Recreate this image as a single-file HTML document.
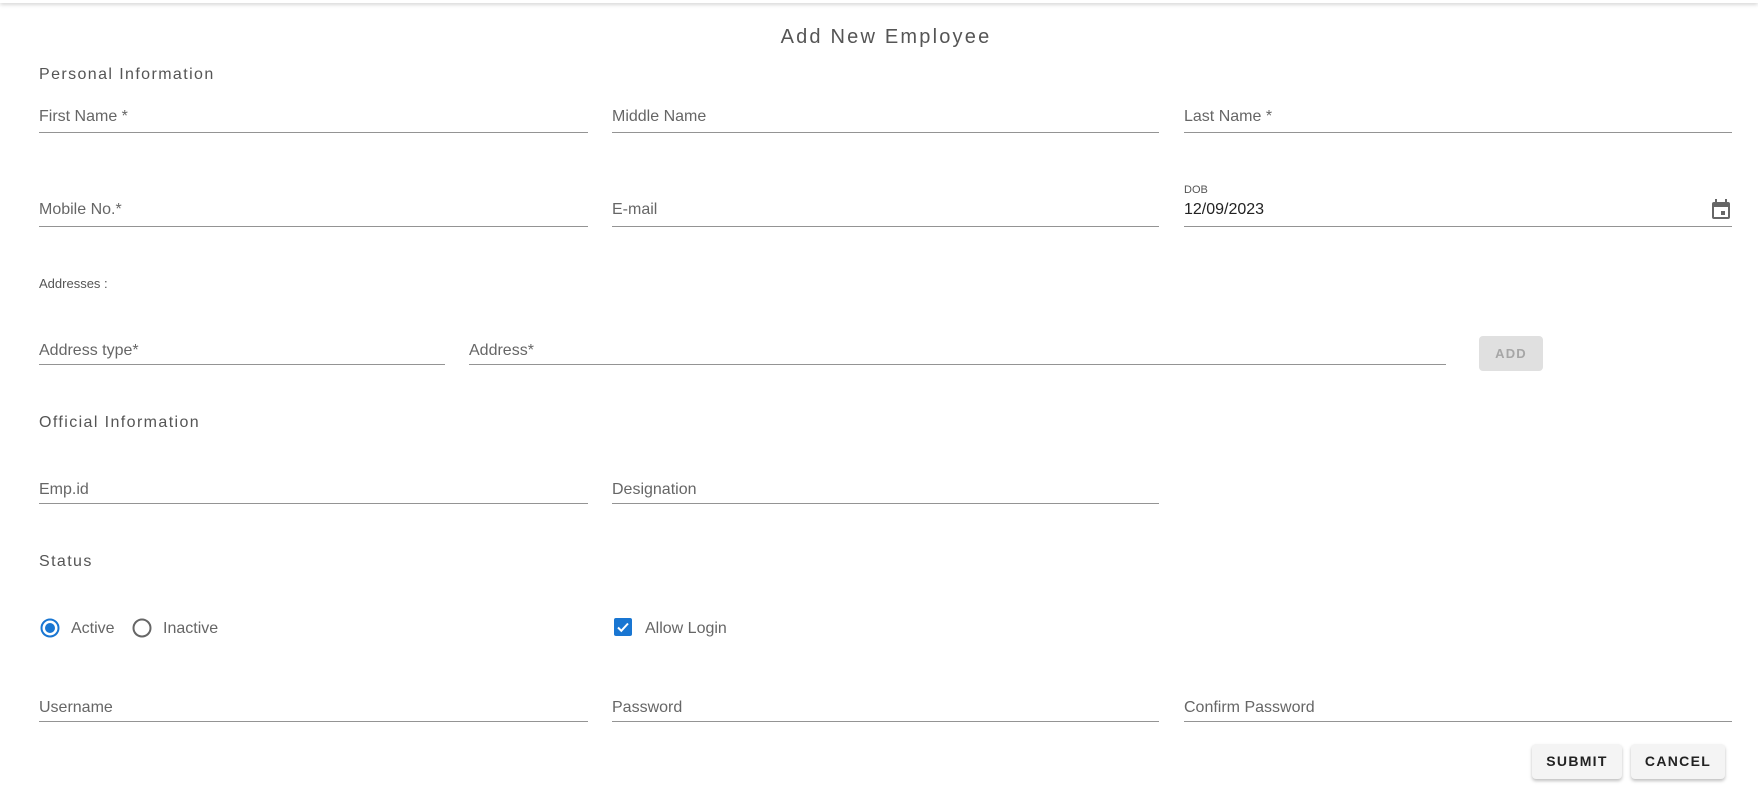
<!DOCTYPE html>
<html><head><style>
body{margin:0;width:1758px;height:810px;background:#fff;font-family:"Liberation Sans",sans-serif;position:relative;overflow:hidden;color:#5f5f5f}
.topbar{position:absolute;left:0;top:0;width:1758px;height:3px;box-shadow:0 1px 4px rgba(0,0,0,.25)}
.t{position:absolute;white-space:nowrap}
.h{font-size:16px;color:#555;letter-spacing:1.4px}
.lbl{font-size:16px;color:#666}
.ul{position:absolute;height:1px;background:#949494}
.btn{position:absolute;background:#f4f4f4;border-radius:4px;box-shadow:0 2px 3px rgba(0,0,0,.25);font-size:14px;font-weight:bold;letter-spacing:1.3px;color:#222;text-align:center}
</style></head><body>
<div class="topbar"></div>
<div class="t" style="left:0;width:1772px;text-align:center;top:26px;font-size:20px;color:#555;letter-spacing:2.2px">Add New Employee</div>
<div class="t h" style="left:39px;top:66px">Personal Information</div>

<div class="t lbl" style="left:39px;top:108px">First Name *</div>
<div class="t lbl" style="left:612px;top:108px">Middle Name</div>
<div class="t lbl" style="left:1184px;top:108px">Last Name *</div>
<div class="ul" style="left:39px;width:549px;top:132px"></div>
<div class="ul" style="left:612px;width:547px;top:132px"></div>
<div class="ul" style="left:1184px;width:548px;top:132px"></div>

<div class="t lbl" style="left:39px;top:201px">Mobile No.*</div>
<div class="t lbl" style="left:612px;top:201px">E-mail</div>
<div class="t" style="left:1184px;top:184px;font-size:11px;color:#555">DOB</div>
<div class="t" style="left:1184px;top:201px;font-size:16px;color:#222">12/09/2023</div>
<svg style="position:absolute;left:1711px;top:198px" width="20" height="22" viewBox="0 0 20 22"><rect x="1" y="4" width="18" height="17" rx="2" fill="#666"/><rect x="3" y="9" width="14" height="10" fill="#fff"/><rect x="4" y="1" width="2" height="4" fill="#666"/><rect x="14" y="1" width="2" height="4" fill="#666"/><rect x="10" y="13" width="4" height="4" fill="#666"/></svg>
<div class="ul" style="left:39px;width:549px;top:226px"></div>
<div class="ul" style="left:612px;width:547px;top:226px"></div>
<div class="ul" style="left:1184px;width:548px;top:226px"></div>

<div class="t" style="left:39px;top:276px;font-size:13px;color:#555">Addresses :</div>

<div class="t lbl" style="left:39px;top:342px">Address type*</div>
<div class="t lbl" style="left:469px;top:342px">Address*</div>
<div class="ul" style="left:39px;width:406px;top:364px"></div>
<div class="ul" style="left:469px;width:977px;top:364px"></div>
<div style="position:absolute;left:1479px;top:336px;width:64px;height:35px;background:#e0e0e0;border-radius:4px;font-size:13px;font-weight:bold;color:#a6a6a6;letter-spacing:1.2px;text-align:center;line-height:35px">ADD</div>

<div class="t h" style="left:39px;top:414px">Official Information</div>
<div class="t lbl" style="left:39px;top:481px">Emp.id</div>
<div class="t lbl" style="left:612px;top:481px">Designation</div>
<div class="ul" style="left:39px;width:549px;top:503px"></div>
<div class="ul" style="left:612px;width:547px;top:503px"></div>

<div class="t h" style="left:39px;top:553px">Status</div>

<svg style="position:absolute;left:40px;top:618px" width="20" height="20"><circle cx="10" cy="10" r="8.5" fill="none" stroke="#1976d2" stroke-width="2"/><circle cx="10" cy="10" r="5" fill="#1976d2"/></svg>
<div class="t lbl" style="left:71px;top:620px">Active</div>
<svg style="position:absolute;left:132px;top:618px" width="20" height="20"><circle cx="10" cy="10" r="8.5" fill="none" stroke="#666" stroke-width="2"/></svg>
<div class="t lbl" style="left:163px;top:620px">Inactive</div>
<svg style="position:absolute;left:614px;top:618px" width="18" height="18"><rect width="18" height="18" rx="2" fill="#1976d2"/><path d="M4 9.5l3.3 3.3L14 5.5" fill="none" stroke="#fff" stroke-width="2"/></svg>
<div class="t lbl" style="left:645px;top:620px">Allow Login</div>

<div class="t lbl" style="left:39px;top:699px">Username</div>
<div class="t lbl" style="left:612px;top:699px">Password</div>
<div class="t lbl" style="left:1184px;top:699px">Confirm Password</div>
<div class="ul" style="left:39px;width:549px;top:721px"></div>
<div class="ul" style="left:612px;width:547px;top:721px"></div>
<div class="ul" style="left:1184px;width:548px;top:721px"></div>

<div class="btn" style="left:1532px;top:744px;width:90px;height:35px;line-height:35px">SUBMIT</div>
<div class="btn" style="left:1631px;top:744px;width:94px;height:35px;line-height:35px">CANCEL</div>
</body></html>
